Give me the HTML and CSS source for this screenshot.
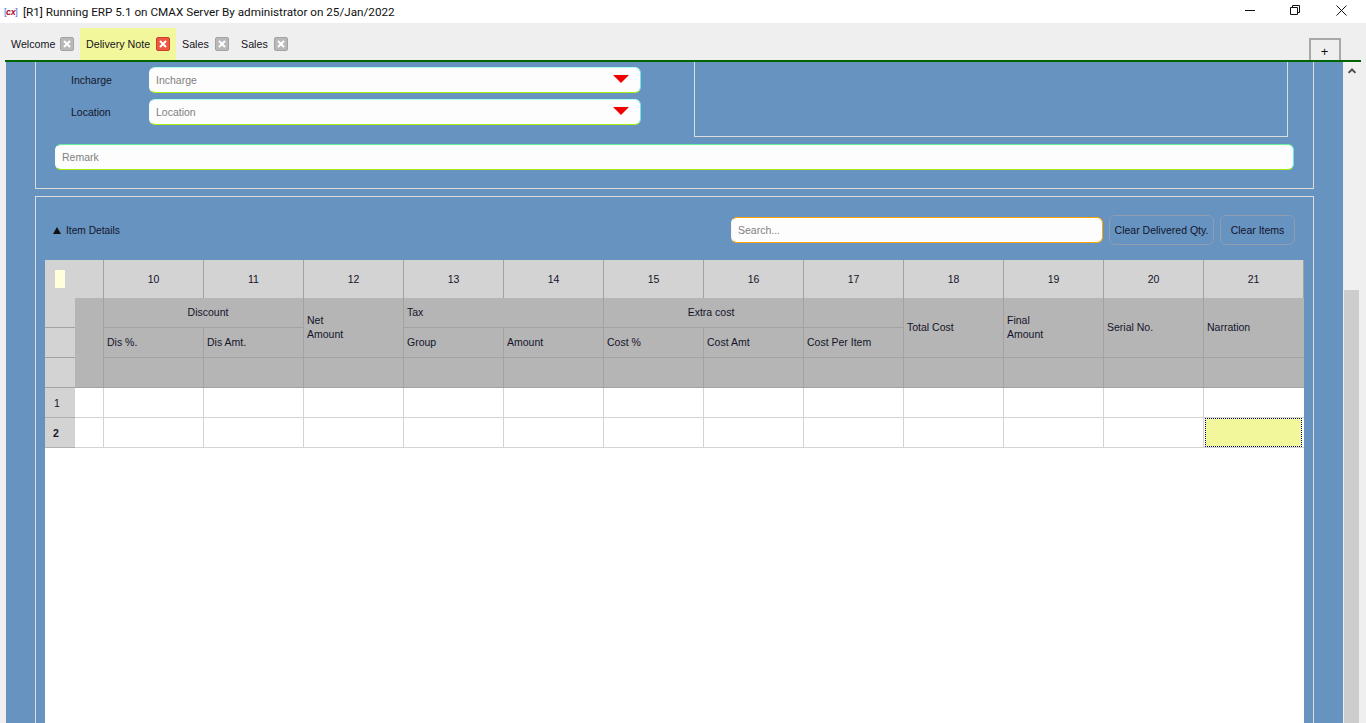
FILE: index.html
```html
<!DOCTYPE html>
<html lang="en">
<head>
<meta charset="utf-8">
<title>Delivery Note</title>
<link rel="stylesheet" href="styles.css">
</head>
<body>
<div class="app">
  <header class="titlebar">
    <span class="logo"><i>[</i><b>cx</b><i>]</i></span>
    <span class="title">[R1] Running ERP 5.1 on CMAX Server By administrator on 25/Jan/2022</span>
    <div class="winctl">
      <svg class="winicon" viewBox="0 0 11 11"><path d="M0 5.5h10" /></svg>
      <svg class="winicon" viewBox="0 0 11 11"><path d="M.5 2.5h7v7h-7zM2.5 2.5v-2h7v7h-2" /></svg>
      <svg class="winicon winicon-close" viewBox="0 0 11 11"><path d="M.5 .5l10 10M10.500 .5l-10 10" /></svg>
    </div>
  </header>
  <nav class="tabbar">
    <div class="tab tab-welcome"><span>Welcome</span><span class="x"><svg viewBox="0 0 10 10"><path d="M2 2l6 6M8 2L2 8"/></svg></span></div>
    <div class="tab tab-active"><span>Delivery Note</span><span class="x x-red"><svg viewBox="0 0 10 10"><path d="M2 2l6 6M8 2L2 8"/></svg></span></div>
    <div class="tab"><span>Sales</span><span class="x"><svg viewBox="0 0 10 10"><path d="M2 2l6 6M8 2L2 8"/></svg></span></div>
    <div class="tab"><span>Sales</span><span class="x"><svg viewBox="0 0 10 10"><path d="M2 2l6 6M8 2L2 8"/></svg></span></div>
    <button class="addtab">+</button>
  </nav>
  <div class="body">
    <main class="content">
      <section class="box box-top">
        <div class="toprow">
          <div class="formcol">
            <div class="formrow">
              <label class="lbl">Incharge</label>
              <div class="field"><input class="inp" placeholder="Incharge"><span class="caret"></span></div>
            </div>
            <div class="formrow">
              <label class="lbl">Location</label>
              <div class="field"><input class="inp" placeholder="Location"><span class="caret"></span></div>
            </div>
          </div>
          <div class="sidepanel"></div>
        </div>
        <div class="field field-remark"><input class="inp" placeholder="Remark"></div>
      </section>
      <section class="box box-items">
        <div class="itemhead">
          <span class="toggle"><span class="tri"></span>Item Details</span>
          <div class="tools">
            <div class="field field-search"><input class="inp" placeholder="Search..."></div>
            <button class="btn">Clear Delivered Qty.</button>
            <button class="btn btn-items">Clear Items</button>
          </div>
        </div>
        <div class="grid">
          <div class="c lt corner"><span class="chk"></span></div>
          <div class="c lt num">10</div><div class="c lt num">11</div><div class="c lt num">12</div>
          <div class="c lt num">13</div><div class="c lt num">14</div><div class="c lt num">15</div>
          <div class="c lt num">16</div><div class="c lt num">17</div><div class="c lt num">18</div>
          <div class="c lt num">19</div><div class="c lt num">20</div><div class="c lt num num-last">21</div>

          <div class="c lt rh"></div>
          <div class="c dk gut"></div>
          <div class="c dk ctr span2">Discount</div>
          <div class="c dk span-r2">Net<br>Amount</div>
          <div class="c dk span2">Tax</div>
          <div class="c dk ctr ctr-wide span2">Extra cost</div>
          <div class="c dk"></div>
          <div class="c dk span-r2">Total Cost</div>
          <div class="c dk span-r2">Final<br>Amount</div>
          <div class="c dk span-r2">Serial No.</div>
          <div class="c dk span-r2">Narration</div>

          <div class="c lt rh"></div>
          <div class="c dk">Dis %.</div>
          <div class="c dk">Dis Amt.</div>
          <div class="c dk">Group</div>
          <div class="c dk">Amount</div>
          <div class="c dk">Cost %</div>
          <div class="c dk">Cost Amt</div>
          <div class="c dk">Cost Per Item</div>

          <div class="c lt rh"></div>
          <div class="c dk gut-end"></div>
          <div class="c dk"></div><div class="c dk"></div><div class="c dk"></div><div class="c dk"></div>
          <div class="c dk"></div><div class="c dk"></div><div class="c dk"></div><div class="c dk"></div>
          <div class="c dk"></div><div class="c dk"></div><div class="c dk"></div><div class="c dk"></div>

          <div class="c lt rownum">1</div>
          <div class="c wh wh-first"></div><div class="c wh"></div><div class="c wh"></div><div class="c wh"></div>
          <div class="c wh"></div><div class="c wh"></div><div class="c wh"></div><div class="c wh"></div>
          <div class="c wh"></div><div class="c wh"></div><div class="c wh"></div><div class="c wh"></div><div class="c wh"></div>

          <div class="c lt rownum rownum-cur">2</div>
          <div class="c wh wh-first"></div><div class="c wh"></div><div class="c wh"></div><div class="c wh"></div>
          <div class="c wh"></div><div class="c wh"></div><div class="c wh"></div><div class="c wh"></div>
          <div class="c wh"></div><div class="c wh"></div><div class="c wh"></div><div class="c wh"></div>
          <div class="c wh cur"><span class="curbox"></span></div>
        </div>
      </section>
    </main>
    <aside class="scroll">
      <svg class="scrollup" viewBox="0 0 10 8"><path d="M1.5 6L5 2.5 8.500 6" /></svg>
      <div class="thumb"></div>
    </aside>
  </div>
</div>
</body>
</html>
```

FILE: styles.css
```css
* { box-sizing: border-box; }
html, body { margin: 0; height: 100%; overflow: hidden; }
body { font-family: "Liberation Sans", Arial, sans-serif; font-size: 10.5px; color: #14141e; background: #efefef; }
.app { display: flex; flex-direction: column; height: 723px; overflow: hidden; }

.titlebar { flex: none; height: 23px; background: #fff; display: flex; align-items: center; padding-left: 4px; }
.logo { width: 19px; font-size: 9px; font-weight: 700; font-style: italic; white-space: nowrap; letter-spacing: -0.4px; }
.logo i { color: #2f6fd0; font-style: normal; font-weight: 400; }
.logo b { color: #b01030; }
.title { font-family: Roboto, sans-serif; font-size: 11.7px; color: #111; white-space: nowrap; }
.winctl { margin-left: auto; margin-bottom: 3px; display: flex; padding-right: 19px; }
.winicon { width: 11px; height: 11px; margin-left: 34px; fill: none; stroke: #111; stroke-width: 1; }
.winicon-close { margin-left: 35px; }

.tabbar { flex: none; height: 39px; display: flex; align-items: flex-end; margin: 0 5px 0 5px; border-bottom: 2px solid #006400; }
.tab { width: 59px; height: 32px; display: flex; align-items: center; justify-content: space-between; padding: 0 6px; font-size: 10.7px; }
.tab-welcome { width: 75px; }
.tab-active { width: 96px; background: #f2f79b; }
.x { flex: none; width: 14px; height: 14px; background: #b9b9b9; border: 1px solid #a3a3a3; border-radius: 2px; display: flex; align-items: center; justify-content: center; }
.x svg { width: 10px; height: 10px; fill: none; stroke: #fff; stroke-width: 2; }
.x-red { background: #ea5a41; border-color: #cf3f2b; }
.addtab { margin-left: auto; margin-right: 20px; width: 32px; height: 22px; padding: 3px 1px 0 0; background: #efefef; border: 2px solid #a8a8a8; border-bottom: 0; font-family: inherit; font-size: 13px; line-height: 1; color: #111; }

.body { flex: 1; min-height: 0; display: flex; padding-left: 6px; overflow: hidden; }
.content { flex: none; width: 1337px; background: #6693c0; padding: 0 29px; overflow: hidden; }
.box { border: 1px solid #dcdcdc; }
.box-top { border-top: 0; padding: 0 19px 18px; height: 127px; }
.box-items { margin-top: 7px; padding: 18px 9px 0; border-bottom: 0; height: 600px; }

.toprow { display: flex; height: 75px; }
.formcol { width: 586px; padding-top: 5px; display: flex; flex-direction: column; gap: 6px; }
.formrow { display: flex; align-items: center; }
.lbl { width: 94px; padding-left: 16px; font-size: 10.5px; color: #14142a; }
.field { display: flex; align-items: center; height: 26px; background: #fdfdfd; border: 1px solid #66ee99; border-left-color: #f4fff4; border-right-color: #66eedd; border-bottom-color: #a8f010; border-radius: 6px; }
.formrow .field { width: 492px; padding-right: 11px; border-top-color: #b0ffee; }
.inp { flex: 1; min-width: 0; height: 100%; border: 0; outline: 0; background: transparent; padding: 0 6px; font-family: "Liberation Sans", Arial, sans-serif; font-size: 10.5px; color: #333; }
.inp::placeholder { color: #808080; opacity: 1; }
.caret { flex: none; width: 0; height: 0; margin-bottom: 2px; border-style: solid; border-width: 8px 8px 0; border-color: #f00000 transparent transparent; }
.sidepanel { width: 594px; margin-left: 53px; border: 1px solid #dcdcdc; border-top: 0; }
.field-remark { margin-top: 7px; width: 1239px; }

.itemhead { display: flex; align-items: center; justify-content: space-between; height: 30px; margin-bottom: 15px; padding: 0 9px 0 8px; }
.toggle { display: flex; align-items: center; font-size: 10.2px; color: #14142a; }
.tri { width: 0; height: 0; margin-right: 5px; border-style: solid; border-width: 0 4px 7px; border-color: transparent transparent #111; }
.tools { display: flex; align-items: center; gap: 6px; }
.field-search { width: 372px; border-color: #ffa500; border-left-color: #fff0d8; }
.btn { height: 30px; padding: 0; width: 105px; background: #6693c0; border: 1px solid #8f9db0; border-radius: 6px; font-family: inherit; font-size: 10.5px; color: #14142a; white-space: nowrap; }
.btn-items { width: 75px; }

.grid { width: 1259px; height: 700px; background: #fff; display: grid; grid-template-columns: 30px 28px repeat(11, 100px) 101px; grid-template-rows: 38px 30px 30px 30px 30px 30px; align-content: start; }
.c { display: flex; align-items: center; padding-left: 3px; font-size: 10.5px; color: #14142a; line-height: 14px; }
.lt { background: #d3d3d3; }
.dk { display: block; background: #b5b5b5; border-left: 1px solid #a3a3a3; border-bottom: 1px solid #a3a3a3; padding-top: 7px; }
.wh { background: #fff; border-left: 1px solid #d3d3d3; border-bottom: 1px solid #d3d3d3; }
.wh-first { border-left: 0; }
.corner { grid-column: span 2; padding-left: 10px; }
.chk { width: 10px; height: 18px; background: #ffffdc; }
.num { justify-content: center; padding: 0; border-left: 1px solid #a3a3a3; }
.num-last { border-right: 1px solid #a3a3a3; }
.rh { border-bottom: 1px solid #a3a3a3; }
.gut { grid-row: span 2; border-left: 0; border-bottom: 0; }
.gut-end { border-left: 0; }
.ctr { text-align: center; padding-left: 9px; }
.ctr-wide { padding-left: 15px; }
.span2 { grid-column: span 2; }
.span-r2 { grid-row: span 2; display: flex; align-items: center; padding-top: 0; padding-bottom: 1px; }
.rownum { padding-left: 9px; border-bottom: 1px solid #b0b0b0; }
.rownum-cur { font-weight: 700; padding-left: 8px; }
.cur { padding: 0 2px 0 1px; }
.curbox { display: block; width: 100%; height: 100%; background: #f2f79b; outline: 1px dotted #00008b; outline-offset: -1px; }

.scroll { flex: none; width: 17px; background: #f0f0f0; display: flex; flex-direction: column; align-items: center; }
.scrollup { width: 10px; height: 8px; margin-top: 5px; fill: none; stroke: #505050; stroke-width: 2; }
.thumb { width: 15px; height: 440px; margin-top: 215px; background: #cdcdcd; }
```
